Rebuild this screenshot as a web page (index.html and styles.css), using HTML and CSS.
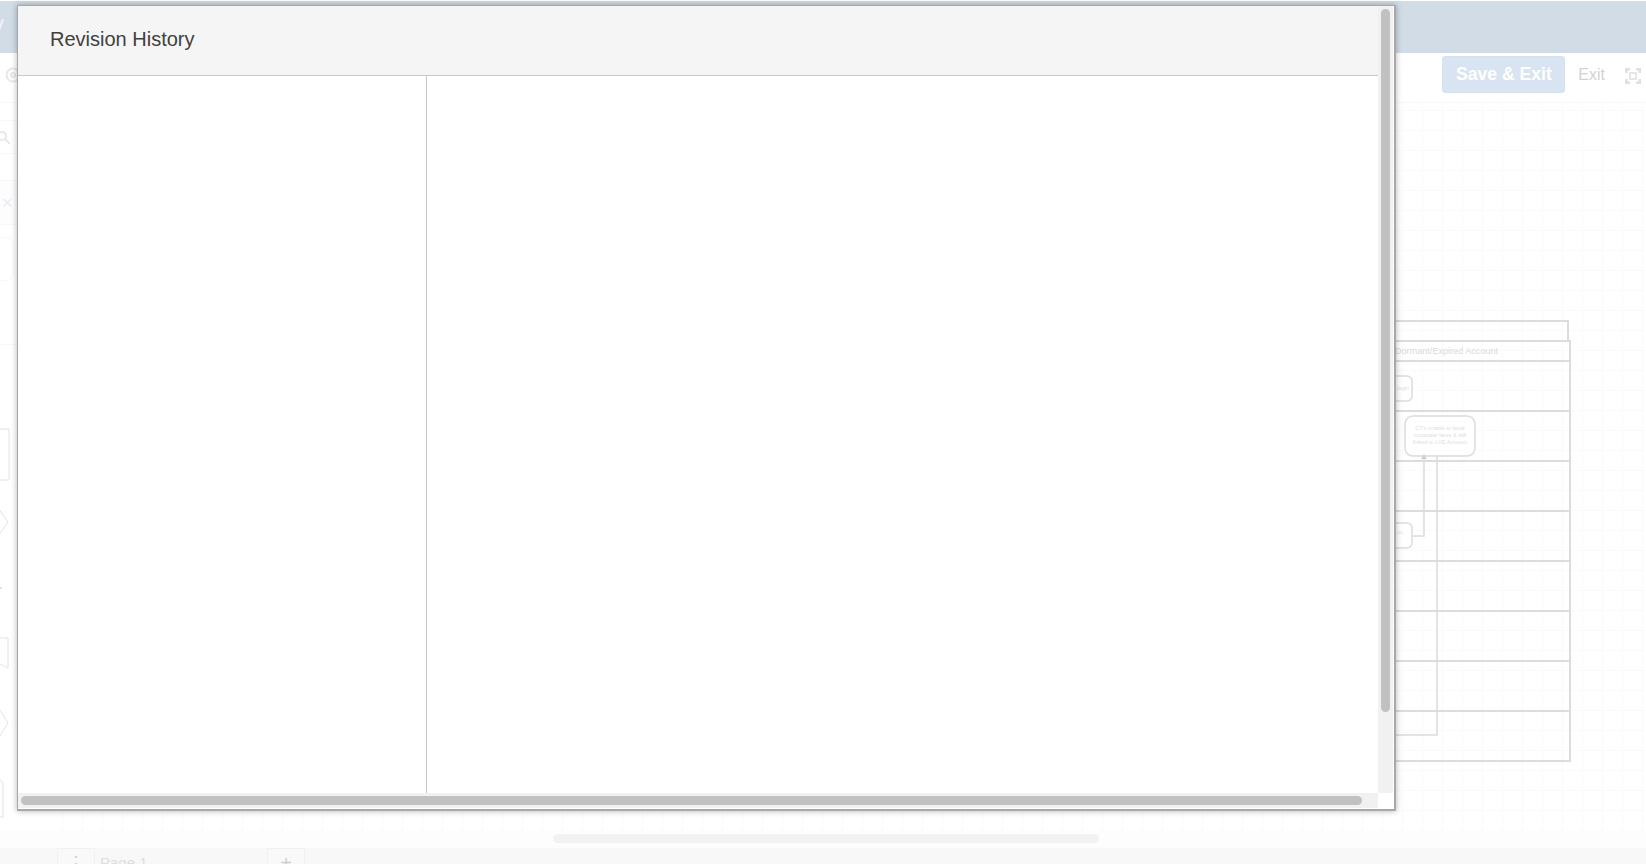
FILE: index.html
```html
<!DOCTYPE html>
<html lang="en">
<head>
<meta charset="utf-8">
<title>Revision History</title>
<link rel="stylesheet" href="styles.css">
</head>
<body>
<div class="app">
  <header class="topbar"><span class="app-title">y</span></header>
  <div class="toolbar">
    <svg class="tool-circle" viewBox="0 0 16 16" width="16" height="16"><circle cx="8" cy="8" r="6.5"/><circle cx="8" cy="8" r="2"/></svg>
    <div class="toolbar-actions">
      <button class="save-btn">Save &amp; Exit</button>
      <span class="exit-link">Exit</span>
      <svg class="fullscreen" viewBox="0 0 16 16" width="16" height="16"><path d="M1 5V1h4M11 1h4v4M15 11v4h-4M5 15H1v-4"/><rect class="core" x="5" y="5" width="6" height="6"/></svg>
    </div>
  </div>
  <div class="main">
    <aside class="sidebar">
      <div class="side-row side-a"></div>
      <div class="side-row side-search">
        <svg viewBox="0 0 14 14" width="14" height="14"><circle cx="5" cy="5" r="4"/><path d="M8 8l5 5"/></svg>
      </div>
      <div class="side-row side-b"></div>
      <div class="side-row side-close"><span class="close-x">✕</span></div>
      <div class="side-row side-c"><div class="side-card"></div></div>
      <svg class="shapes" viewBox="0 0 16 483" width="16" height="483">
        <path d="M-8 0H9V51H-8"/>
        <path d="M-4 76L8 93L-4 110"/>
        <circle class="dot" cx="1" cy="159" r="1"/>
        <path d="M-8 209H8V239L-8 231"/>
        <path d="M-2 278L8 294L-2 310"/>
        <path d="M-8 349H-1L3 354V388H-8"/>
      </svg>
    </aside>
    <section class="canvas">
      <svg class="diagram" viewBox="1340 103 306 727" width="306" height="727">
        <g class="frame">
          <path d="M1380 321H1568V341"/>
          <path class="outer" d="M1380 341H1570V761H1380"/>
          <path d="M1380 361H1570M1380 411H1570M1380 461H1570M1380 511H1570M1380 561H1570M1380 611H1570M1380 661H1570M1380 711H1570"/>
        </g>
        <g class="nodes">
          <rect x="1380" y="376" width="32" height="25" rx="5"/>
          <rect x="1405" y="416" width="70" height="40" rx="8"/>
          <rect x="1380" y="523" width="32" height="25" rx="5"/>
          <path d="M1412 536H1424V458"/>
          <path d="M1437 456V735H1380"/>
          <path class="arrow" d="M1424 454l3 5h-6z"/>
        </g>
        <text class="heading" x="1395" y="354">Dormant/Expired Account</text>
        <text class="tiny" x="1440" y="430">CT's unable to book</text>
        <text class="tiny" x="1440" y="437">corporate fares &amp; still</text>
        <text class="tiny" x="1440" y="444">linked to LVE Account</text>
        <text class="tiny" x="1403" y="390">login</text>
        <text class="tiny" x="1400" y="534">ox</text>
      </svg>
    </section>
  </div>
  <div class="canvas-scroll"><div class="canvas-thumb"></div></div>
  <footer class="tabs">
    <div class="tab tab-menu"><span class="tab-glyph">⋮</span></div>
    <div class="tab tab-page">Page 1</div>
    <div class="tab tab-add"><span class="tab-glyph">+</span></div>
  </footer>
</div>

<div class="modal">
  <div class="modal-view">
    <div class="modal-head">Revision History</div>
    <div class="modal-body">
      <div class="rev-list"></div>
      <div class="rev-preview"></div>
    </div>
  </div>
  <div class="scroll-v"><div class="thumb-v"></div></div>
  <div class="scroll-h"><div class="thumb-h"></div></div>
  <div class="scroll-corner"></div>
</div>
</body>
</html>
```
FILE: styles.css
```css
* { box-sizing: border-box; }
html, body { margin: 0; height: 100%; overflow: hidden; background: #fff; font-family: "Liberation Sans", Arial, sans-serif; }

.app { display: flex; flex-direction: column; width: 1646px; height: 864px; overflow: hidden; }

.topbar {
  height: 53px; flex: none; background: #d2dce6; border-top: 1px solid #fff;
  display: flex; align-items: center; overflow: hidden;
}
.app-title { color: #f2f5f8; font-size: 22px; margin-left: -7px; margin-top: -6px; }

.toolbar {
  height: 50px; flex: none; display: flex; align-items: center; justify-content: space-between;
  border-bottom: 1px solid #f8f8f8; background: #fff; padding: 0 0 5px 5px;
}
.tool-circle { fill: none; stroke: #e8e8e8; stroke-width: 2; }
.toolbar-actions { display: flex; align-items: center; padding: 1px 5px 0 0; }
.save-btn {
  width: 123px; height: 37px; margin-top: -3px; border: 1px solid #d5e2ee; border-radius: 3px; background: #d8e4f1;
  color: #fff; font: bold 17.6px "Liberation Sans", Arial, sans-serif; padding: 0;
}
.exit-link { color: #d2d2d2; font-size: 16px; margin-left: 13px; margin-top: -1px; }
.fullscreen { margin-left: 20px; fill: none; stroke: #e0e0e0; stroke-width: 3; }
.fullscreen .core { stroke-width: 2; stroke: #e6e6e6; }

.main { flex: 1; display: flex; min-height: 0; }

.sidebar { width: 58px; flex: none; position: relative; background: #fff; }
.side-row { border-bottom: 1px solid #f8f8f8; }
.side-a { height: 18px; }
.side-search { height: 33px; display: flex; align-items: center; padding-top: 2px; }
.side-search svg { fill: none; stroke: #e8e8e8; stroke-width: 2; margin-left: -3px; }
.side-b { height: 27px; background: #fff; }
.side-close { height: 44px; background: #fdfdfd; display: flex; align-items: center; }
.close-x { color: #e8eef5; font-size: 15px; margin-left: 1px; }
.side-c { height: 120px; padding-top: 12px; }
.side-card { width: 30px; height: 44px; margin-left: -16px; border: 1px solid #f8f8f8; border-radius: 8px; }
.shapes { position: absolute; left: 0; top: 326px; overflow: visible; fill: none; stroke: #e2e2e2; stroke-width: 1; }
.shapes .dot { fill: #d8d8d8; stroke: none; }

.canvas {
  flex: 1; position: relative; overflow: hidden;
  background-color: #fff;
  background-image:
    linear-gradient(to right, #fafafa 1px, transparent 1px),
    linear-gradient(to bottom, #fafafa 1px, transparent 1px);
  background-size: 20px 20px;
  background-position: 4px 7px;
}
.diagram { position: absolute; right: 0; top: 0; }
.frame { fill: none; stroke: #dcdcdc; stroke-width: 2; }
.nodes { fill: #fff; stroke: #dcdcdc; stroke-width: 1.5; }
.nodes path { fill: none; }
.nodes .arrow { fill: #d0d0d0; stroke: none; }
.heading { font-size: 9.1px; fill: #dadada; stroke: none; }
.tiny { font-size: 5.6px; fill: #e0e0e0; text-anchor: middle; stroke: none; }

.canvas-scroll { height: 18px; flex: none; background: #fdfdfd; padding: 4px 0 0 553px; }
.canvas-thumb { width: 546px; height: 9px; border-radius: 5px; background: #f2f2f2; }

.tabs { height: 16px; flex: none; background: #f8f8f8; display: flex; padding-left: 57px; overflow: hidden; color: #dcdcdc; }
.tab { height: 34px; border: 1px solid #f1f1f1; border-bottom: 0; background: #f9f9f9; }
.tab-menu { width: 38px; text-align: center; }
.tab-page { width: 172px; border-width: 1px 0 0; border-color: transparent; background: transparent; font-size: 15px; padding: 5px 0 0 5px; color: #dedede; }
.tab-add { width: 38px; text-align: center; }
.tab-glyph { font-size: 20px; line-height: 28px; color: #cfcfcf; }

.modal {
  position: fixed; left: 17px; top: 5px; width: 1379px; height: 806px;
  border: 1px solid #a8a8a8; border-width: 1px 2px 2px 1px; padding: 0 1px 1px 0; background: #fff;
  box-shadow: 0 0 6px rgba(0, 0, 0, .3);
  display: grid; grid-template-columns: 1fr 15px; grid-template-rows: 1fr 15px;
}
.modal-view { display: flex; flex-direction: column; min-height: 0; }
.modal-head {
  height: 70px; flex: none; background: #f5f5f5; border-bottom: 1px solid #c8c8c8;
  padding: 0 0 3px 32px; display: flex; align-items: center;
  font-size: 20px; color: #404040;
}
.modal-body { flex: 1; display: flex; min-height: 0; }
.rev-list { width: 409px; flex: none; border-right: 1px solid #c4c4c4; }
.rev-preview { flex: 1; }

.scroll-v { background: #f1f1f1; padding: 3px 3px; }
.thumb-v { height: 703px; border-radius: 5px; background: #c1c1c1; }
.scroll-h { background: #f1f1f1; padding: 3px 16px 3px 3px; }
.thumb-h { height: 9px; border-radius: 5px; background: #c1c1c1; }
.scroll-corner { background: #fff; }
```
